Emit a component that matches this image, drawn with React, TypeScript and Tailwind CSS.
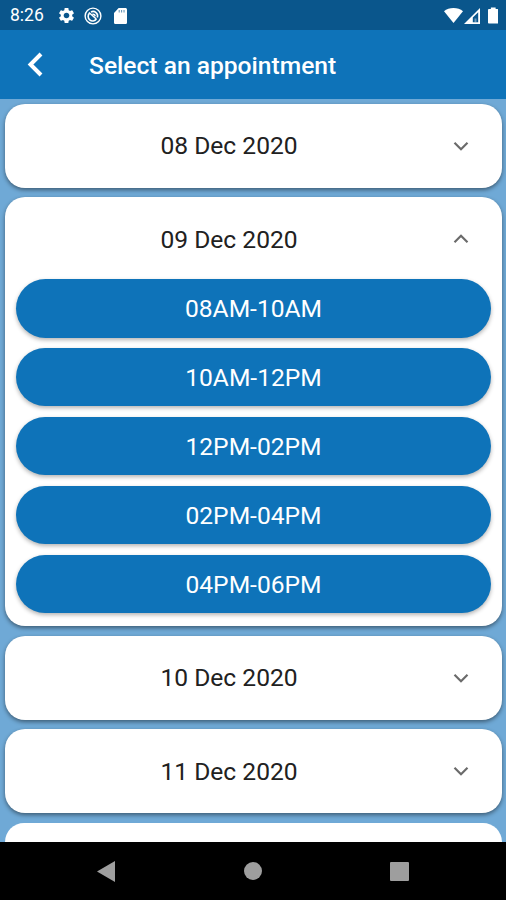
import { useState } from "react";

type Day = {
  label: string;
  slots: string[];
};

const SLOTS = ["08AM-10AM", "10AM-12PM", "12PM-02PM", "02PM-04PM", "04PM-06PM"];

const DAYS: Day[] = [
  { label: "08 Dec 2020", slots: SLOTS },
  { label: "09 Dec 2020", slots: SLOTS },
  { label: "10 Dec 2020", slots: SLOTS },
  { label: "11 Dec 2020", slots: SLOTS },
];

function StatusBar() {
  return (
    <div className="flex h-[30px] shrink-0 items-center bg-[#0a568c] pt-px pr-[8px] pl-[10px] text-white">
      <span className="w-[47px] pt-px text-[17.5px] leading-none">8:26</span>
      <svg className="h-[19px] w-[19px]" viewBox="0 0 24 24" fill="currentColor">
        <path d="M19.14 12.94c.04-.3.06-.61.06-.94 0-.32-.02-.64-.07-.94l2.03-1.58c.18-.14.23-.41.12-.61l-1.92-3.32c-.12-.22-.37-.29-.59-.22l-2.39.96c-.5-.38-1.03-.7-1.62-.94l-.36-2.54c-.04-.24-.24-.41-.48-.41h-3.84c-.24 0-.43.17-.47.41l-.36 2.54c-.59.24-1.13.57-1.62.94l-2.39-.96c-.22-.08-.47 0-.59.22L2.74 8.87c-.12.21-.08.47.12.61l2.03 1.58c-.05.3-.09.63-.09.94s.02.64.07.94l-2.03 1.58c-.18.14-.23.41-.12.61l1.92 3.32c.12.22.37.29.59.22l2.39-.96c.5.38 1.03.7 1.62.94l.36 2.54c.05.24.24.41.48.41h3.84c.24 0 .44-.17.47-.41l.36-2.54c.59-.24 1.13-.56 1.62-.94l2.39.96c.22.08.47 0 .59-.22l1.92-3.32c.12-.22.07-.47-.12-.61l-2.01-1.58zM12 15.6c-1.98 0-3.6-1.62-3.6-3.6s1.62-3.6 3.6-3.6 3.6 1.62 3.6 3.6-1.62 3.6-3.6 3.6z" />
      </svg>
      <svg
        className="ml-2 h-[18px] w-[18px]"
        viewBox="0 0 18 18"
        fill="none"
        stroke="currentColor"
      >
        <circle cx="9" cy="9" r="7.9" strokeWidth="1.4" />
        <path strokeWidth="1.6" d="M5.6 6.200a4.500 4.500 0 1 0 6.800 5.800M7 5a4.500 4.500 0 0 1 6.300 5.500" />
        <path strokeWidth="1.500" d="M5 5.500 12.300 12M8.500 7.200c1.500-.3 2.600.6 2.700 2" />
      </svg>
      <svg className="ml-[12px] h-4 w-[13px]" viewBox="0 0 14 16" preserveAspectRatio="none">
        <path
          fill="currentColor"
          d="M5 0h7.2C13.2 0 14 .7 14 1.6v12.8c0 .9-.8 1.6-1.8 1.6H1.8C.8 16 0 15.300 0 14.400V5z"
        />
        <path stroke="#0a568c" strokeWidth="1" strokeOpacity="0.7" d="M5.600 2v2.500M8.200 2v2.500M10.800 2v2.500" />
      </svg>
      <svg className="ml-auto h-[15px] w-[19px]" viewBox="0 0 19 15" fill="currentColor">
        <path d="M9.500 15 0 3.200C2.500 1.200 5.800 0 9.500 0S16.500 1.200 19 3.200z" />
      </svg>
      <svg className="ml-[1px] h-4 w-4" viewBox="0 0 16 16">
        <path fill="currentColor" fillRule="evenodd" d="M16 0v16H0zM14.200 4.200 8.800 9.600v4.600h5.400z" />
        <path fill="currentColor" fillOpacity="0.4" d="M10.500 10.500h2v3.700h-2z" />
      </svg>
      <svg className="ml-[8px] h-[17px] w-[10.500px]" viewBox="0 0 11 17" fill="currentColor">
        <path d="M3 0h5v1.800h1.800c.7 0 1.200.5 1.200 1.200v12.800c0 .7-.5 1.200-1.200 1.200H1.200C.5 17 0 16.500 0 15.800V3c0-.7.5-1.200 1.200-1.200H3z" />
      </svg>
    </div>
  );
}

function AppBar() {
  return (
    <header className="flex h-[69px] shrink-0 items-center bg-[#0e73b9] pl-[27px] text-white">
      <button type="button" aria-label="Back" className="w-[62px]">
        <svg
          className="h-[25px] w-[17px]"
          viewBox="0 0 17 25"
          fill="none"
          stroke="currentColor"
          strokeWidth="4"
        >
          <path d="M14 2 3.500 12.500 14 23" />
        </svg>
      </button>
      <h1 className="pt-[3px] text-[24.6px] leading-none font-medium">Select an appointment</h1>
    </header>
  );
}

type DayCardProps = {
  day: Day;
  open: boolean;
  onToggle: () => void;
};

function DayCard({ day, open, onToggle }: DayCardProps) {
  return (
    <section className="shrink-0 rounded-[20px] bg-white shadow-[0_2px_4px_rgba(0,0,0,0.45)]">
      <button
        type="button"
        onClick={onToggle}
        className="flex h-[84px] w-full items-center pr-[33px]"
      >
        <span className="flex-1 pt-[2px] text-center text-[24.6px] leading-none text-[#212121]">
          {day.label}
        </span>
        <svg
          className="h-[10px] w-4"
          viewBox="0 0 16 10"
          fill="none"
          stroke="#6b6b6b"
          strokeWidth="2.2"
        >
          <path d={open ? "M1.500 8.300 8 1.800l6.500 6.500" : "M1.500 1.700 8 8.200l6.500-6.500"} />
        </svg>
      </button>

      {open && (
        <div className="-mt-[2px] flex flex-col gap-[10.400px] px-[11px] pb-[13px]">
          {day.slots.map((slot) => (
            <button
              key={slot}
              type="button"
              className="h-[58.500px] rounded-full bg-[#0e73b9] pt-[2px] text-[24.6px] leading-none text-white shadow-[0_2px_4px_rgba(0,0,0,0.3)]"
            >
              {slot}
            </button>
          ))}
        </div>
      )}
    </section>
  );
}

function NavBar() {
  return (
    <nav className="flex h-[58px] shrink-0 items-center justify-between bg-black px-[97px] text-[#9e9e9e]">
      <svg className="h-[21px] w-[18px]" viewBox="0 0 18 21" fill="currentColor">
        <path d="M18 0v21L0 10.500z" />
      </svg>
      <div className="h-[18px] w-[18px] rounded-full bg-[#9e9e9e]" />
      <div className="h-[19px] w-[19px] rounded-[1px] bg-[#9e9e9e]" />
    </nav>
  );
}

export default function App() {
  const [openDay, setOpenDay] = useState("09 Dec 2020");

  return (
    <div className="flex h-[900px] w-[506px] flex-col overflow-hidden bg-[#6fa9d6] font-[Roboto,sans-serif]">
      <StatusBar />
      <AppBar />
      <main className="flex min-h-0 flex-1 flex-col gap-[9.500px] overflow-hidden pt-[4.600px] pr-[4px] pl-[5px]">
        {DAYS.map((day) => (
          <DayCard
            key={day.label}
            day={day}
            open={day.label === openDay}
            onToggle={() => setOpenDay(day.label === openDay ? "" : day.label)}
          />
        ))}
        {/* top edge of the next card */}
        <div className="min-h-0 flex-1 rounded-t-[20px] bg-white" />
      </main>
      <NavBar />
    </div>
  );
}
